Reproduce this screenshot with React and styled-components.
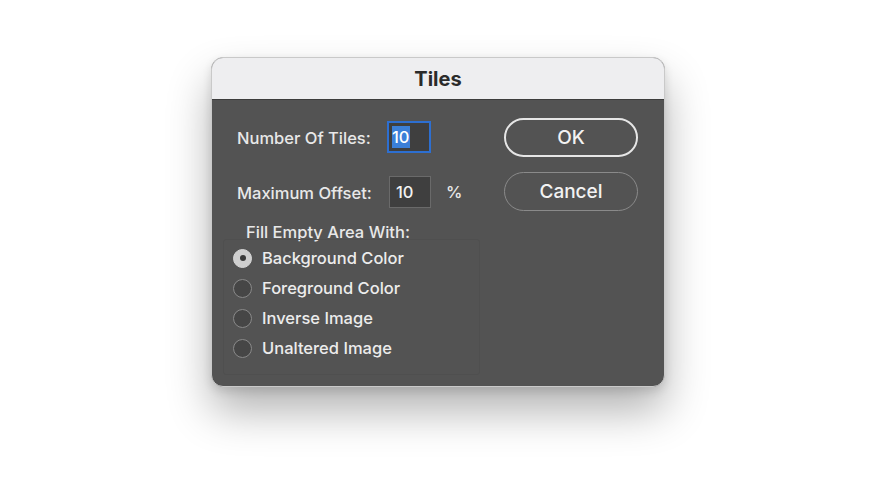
import React from 'react';
import styled, {createGlobalStyle} from 'styled-components';

const Global = createGlobalStyle`
  html, body {
    margin: 0;
    padding: 0;
    background: #ffffff;
  }
  body {
    font-family: Inter, "Liberation Sans", sans-serif;
    -webkit-font-smoothing: antialiased;
  }
`;

const Page = styled.div`
  width: 875px;
  height: 498px;
  padding: 57px 0 0 211px;
  box-sizing: border-box;
`;

const Dialog = styled.div`
  width: 454px;
  height: 330px;
  border-radius: 12px;
  overflow: hidden;
  background: #535353;
  border: 1px solid #c9c9c9;
  box-sizing: border-box;
  display: flex;
  flex-direction: column;
  box-shadow: 0 24px 44px rgba(0, 0, 0, 0.3), 0 4px 10px rgba(0, 0, 0, 0.12);
`;

const TitleBar = styled.div`
  height: 41px;
  flex: none;
  background: #eeeef0;
  display: flex;
  align-items: center;
  justify-content: center;
  font-size: 20px;
  font-weight: 700;
  color: #2b2b2b;
  border-bottom: 1px solid #3c3c3c;
`;

const Body = styled.div`
  flex: 1;
  display: flex;
  padding: 21px 26px 0 25px;
`;

const LeftCol = styled.div`
  flex: 1;
  display: flex;
  flex-direction: column;
`;

const RightCol = styled.div`
  width: 134px;
  display: flex;
  flex-direction: column;
  gap: 15px;
  margin-top: -3px;
`;

const FieldRow = styled.div`
  display: flex;
  align-items: center;
  height: 32px;
  margin-bottom: ${p => p.$mb || 0}px;
  color: #e8e8e8;
  font-size: 16.5px;
  font-weight: 500;
`;

const Label = styled.span`
  width: 150px;
  flex: none;
  padding-top: 1px;
`;

const Input = styled.div`
  width: ${p => p.$focused ? 44 : 42}px;
  height: 32px;
  box-sizing: border-box;
  margin-left: ${p => p.$focused ? 0 : 2}px;
  background: #3f3f3f;
  border: ${p => p.$focused ? '2px solid #2d6fd1' : '1px solid #6a6a6a'};
  display: flex;
  align-items: center;
  padding-left: ${p => p.$focused ? 3 : 6}px;
  color: #f2f2f2;
  font-size: 16.5px;
`;

const Selected = styled.span`
  background: #3b7fd8;
  color: #ffffff;
  padding: 2px 0;
  line-height: 18px;
`;

const Unit = styled.span`
  margin-left: 15px;
`;

const GroupTitle = styled.div`
  color: #e8e8e8;
  font-size: 16.5px;
  font-weight: 500;
  margin: 14px 0 0 9px;
  line-height: 20px;
`;

const Group = styled.div`
  position: relative;
  display: flex;
  flex-direction: column;
  margin-top: 1px;
`;

const GroupFrame = styled.div`
  position: absolute;
  left: -14px;
  top: -4px;
  width: 255px;
  height: 134px;
  border: 1px solid #4f4f4f;
  border-radius: 3px;
  pointer-events: none;
`;

const RadioRow = styled.div`
  position: relative;
  display: flex;
  align-items: center;
  height: 30px;
  color: #ececec;
  font-size: 16.5px;
  font-weight: 500;
`;

const Radio = styled.span`
  width: 19px;
  height: 19px;
  box-sizing: border-box;
  border-radius: 50%;
  margin: 0 10px 0 -4px;
  flex: none;
  display: flex;
  align-items: center;
  justify-content: center;
  background: ${p => p.$on ? '#cfcfcf' : '#464646'};
  border: 1px solid ${p => p.$on ? '#d6d6d6' : '#8a8a8a'};

  &::after {
    content: '';
    display: ${p => p.$on ? 'block' : 'none'};
    width: 6px;
    height: 6px;
    border-radius: 50%;
    background: #3a3a3a;
  }
`;

const Button = styled.div`
  height: 39px;
  box-sizing: border-box;
  border-radius: 20px;
  border: ${p => p.$primary ? '2px solid #e6e6e6' : '1.5px solid #8a8a8a'};
  display: flex;
  align-items: center;
  justify-content: center;
  color: #f2f2f2;
  font-size: 19px;
  font-weight: 500;
`;

const options = [
  {label: 'Background Color', on: true},
  {label: 'Foreground Color'},
  {label: 'Inverse Image'},
  {label: 'Unaltered Image'},
];

export default function App() {
  return (
    <Page>
      <Global/>
      <Dialog>
        <TitleBar>Tiles</TitleBar>
        <Body>
          <LeftCol>
            <FieldRow $mb={23}>
              <Label>Number Of Tiles:</Label>
              <Input $focused><Selected>10</Selected></Input>
            </FieldRow>
            <FieldRow>
              <Label>Maximum Offset:</Label>
              <Input>10</Input>
              <Unit>%</Unit>
            </FieldRow>
            <GroupTitle>Fill Empty Area With:</GroupTitle>
            <Group>
              <GroupFrame/>
              {options.map(o => (
                <RadioRow key={o.label}>
                  <Radio $on={o.on}/>
                  {o.label}
                </RadioRow>
              ))}
            </Group>
          </LeftCol>
          <RightCol>
            <Button $primary>OK</Button>
            <Button>Cancel</Button>
          </RightCol>
        </Body>
      </Dialog>
    </Page>
  );
}
